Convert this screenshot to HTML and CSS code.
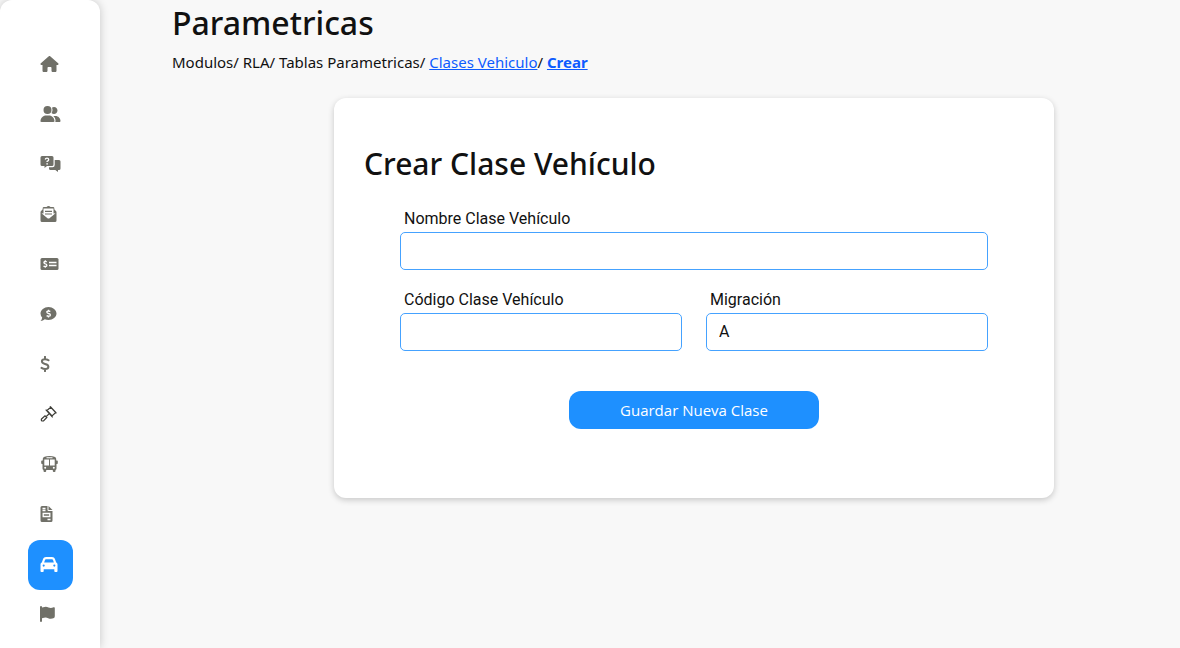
FILE: index.html
```
<!DOCTYPE html>
<html lang="es">
<head>
    <meta charset="utf-8">
    <title>Crear Clase Vehículo</title>
    <meta name="viewport" content="width=device-width, initial-scale=1.0">
    <link rel="stylesheet" href="styles.css">
</head>

<body>
<nav class="sidebar">
    <a href="#" aria-label="Inicio">
        <svg width="19" height="16" viewBox="0 0 576 512"><path d="M575.8 255.5c0 18-15 32.1-32 32.1h-32l.7 160.2c0 2.7-.2 5.4-.5 8.1V472c0 22.1-17.9 40-40 40H392c-22.1 0-40-17.9-40-40V384c0-17.7-14.3-32-32-32H256c-17.7 0-32 14.3-32 32v88c0 22.1-17.9 40-40 40H104c-22.1 0-40-17.9-40-40V287.6H32c-18 0-32-14-32-32.1c0-9 3-17 10-24L266.4 8c7-7 15-8 22-8s15 2 21 7L564.8 231.5c8 7 12 15 11 24z"/></svg>
    </a>
    <a href="#" aria-label="Usuarios">
        <svg width="21" height="16" viewBox="0 0 640 512"><path d="M96 128a128 128 0 1 1 256 0A128 128 0 1 1 96 128zM0 482.3C0 383.8 79.8 304 178.3 304h91.4C368.2 304 448 383.8 448 482.3c0 16.4-13.3 29.7-29.7 29.7H29.7C13.3 512 0 498.7 0 482.3zM609.3 512H471.4c5.4-9.4 8.6-20.3 8.6-32v-8c0-60.7-27.1-115.2-69.8-151.8c2.4-.1 4.7-.2 7.1-.2h61.4C567.8 320 640 392.2 640 481.3c0 17-13.8 30.7-30.7 30.7zM432 256c-31 0-59-12.6-79.3-32.9C372.4 196.5 384 163.6 384 128c0-26.8-6.6-52.1-18.3-74.3C384.3 40.1 407.2 32 432 32c61.9 0 112 50.1 112 112s-50.1 112-112 112z"/></svg>
    </a>
    <a href="#" aria-label="Consultas">
        <svg width="21" height="16" viewBox="0 0 20 16">
            <path d="M1.5 0H11.5Q13 0 13 1.5V8.5Q13 10 11.5 10H6.5L4 12V10H1.5Q0 10 0 8.5V1.5Q0 0 1.5 0z"/>
            <path d="M14.2 4H18.5Q20 4 20 5.5V12.5Q20 14 18.5 14H17.5V16L14.8 14H10Q8.5 14 8.5 12.5V11.2H12Q14.2 11.2 14.2 9z"/>
            <path class="cut" d="M4.7 3.5Q5 2.2 6.5 2.2Q8.2 2.2 8.2 3.7Q8.2 4.5 6.6 5.3V6"/>
            <circle class="hole" cx="6.6" cy="7.9" r=".8"/>
        </svg>
    </a>
    <a href="#" aria-label="Correspondencia">
        <svg width="17" height="16" viewBox="0 0 16 16">
            <path d="M8 0Q9 0 10 1H12.5Q13.8 1 13.8 2V3.3L15.4 5Q16 5.5 16 6.2V14.5Q16 16 14.5 16H1.5Q0 16 0 14.5V6.2Q0 5.5.6 5L2.2 3.3V2Q2.2 1 3.5 1H6Q7 0 8 0z"/>
            <path class="hole" d="M3 2.5H13V7.5L15 7.3L9.3 12Q8 13 6.7 12L1 7.3L3 7.5z"/>
            <path class="line" d="M4.5 5.3H11.5M4.5 8H11.5"/>
        </svg>
    </a>
    <a href="#" aria-label="Pagos">
        <svg width="19" height="16" viewBox="0 0 18 16">
            <rect y="2" width="18" height="12" rx="1.5"/>
            <path class="cut" d="M8.5 6.5H16M8.5 9.5H16M6.2 6Q5.7 5.5 4.7 5.5Q3.4 5.5 3.4 6.6Q3.4 7.5 4.8 7.9Q6.4 8.3 6.4 9.4Q6.4 10.5 4.8 10.5Q3.7 10.5 3 9.9M4.8 4.3V5.5M4.8 10.5V11.7"/>
        </svg>
    </a>
    <a href="#" aria-label="Cobros">
        <svg width="17" height="16" viewBox="0 0 16 16">
            <path d="M8 1C12.4 1 16 4 16 7.5S12.4 14 8 14Q6 14 4.3 13.3Q2.5 15 0 15Q1.5 13.5 1.7 11.5Q0 9.7 0 7.5C0 4 3.6 1 8 1z"/>
            <path class="cut" d="M9.8 5.6Q9 5 8 5Q6.3 5 6.3 6.1Q6.3 7.1 8 7.5Q9.9 7.9 9.9 9Q9.9 10.2 8 10.2Q7 10.2 6.1 9.6M8 3.7V5M8 10.2V11.5"/>
        </svg>
    </a>
    <a href="#" aria-label="Tarifas">
        <svg width="10" height="16" viewBox="0 0 10 16"><path class="line thick" d="M8.5 4.3Q7 3.2 5 3.2Q1.9 3.2 1.9 5.3Q1.9 7.2 5 7.9Q8.4 8.6 8.4 10.7Q8.4 13 5.2 13Q3.3 13 1.5 11.9M5 .8V3M5 13V15.2"/></svg>
    </a>
    <a href="#" aria-label="Juzgados">
        <svg width="17" height="16" viewBox="0 0 16 16"><path class="line dark" d="M6.5 4.5L10.3 1L15.3 6.5L11.5 10zM5.2 3.7L12.2 11.3M9.4 .4L15.9 7.4M8.8 7.6L6 10.2M1 13L4.5 9.8L6.3 11.5L3 15H1.5Q.5 14.5 1 13z"/></svg>
    </a>
    <a href="#" aria-label="Transporte">
        <svg width="18" height="16" viewBox="0 0 18 16">
            <path d="M9.5 0Q16 0 16.2 2.8V4.5H17Q17.8 4.5 17.8 5.3V7.2Q17.8 8 17 8H16.5V12.5Q16.5 13.5 15.5 14V15Q15.5 16 14.5 16H13.8Q12.8 16 12.8 15V14H6.2V15Q6.2 16 5.2 16H4.5Q3.5 16 3.5 15V14Q2.5 13.5 2.5 12.5V8H2Q1.2 8 1.2 7.2V5.3Q1.2 4.5 2 4.5H2.8V2.8Q3 0 9.5 0z"/>
            <path class="hole" d="M4.3 3.5H9V9.5H4.3zM10 3.5H14.7V9.5H10zM6.5 1.2H12.5V2.2H6.5z"/>
            <circle class="hole" cx="5.2" cy="11.7" r="1"/><circle class="hole" cx="13.8" cy="11.7" r="1"/>
        </svg>
    </a>
    <a href="#" aria-label="Facturas">
        <svg width="13" height="16" viewBox="0 0 12 16">
            <path d="M1.5 0H7V4Q7 5 8 5H12V14.5Q12 16 10.5 16H1.5Q0 16 0 14.5V1.5Q0 0 1.5 0zM8 0L12 4H8z"/>
            <path class="cut" d="M2 2.5H5M2 4.5H5M2.7 7.5H9.3V10.5H2.7zM7 13.5H10"/>
        </svg>
    </a>
    <a href="#" class="active" aria-label="Vehículos">
        <svg width="18" height="17" viewBox="0 0 512 512"><path d="M135.2 117.4L109.1 192H402.9l-26.1-74.6C372.3 104.6 360.2 96 346.6 96H165.4c-13.6 0-25.7 8.6-30.2 21.4zM39.6 196.8L74.8 96.3C88.3 57.8 124.6 32 165.4 32H346.6c40.8 0 77.1 25.8 90.6 64.3l35.2 100.5c23.2 9.6 39.6 32.5 39.6 59.2V448c0 17.7-14.3 32-32 32H448c-17.7 0-32-14.3-32-32V400H96v48c0 17.7-14.3 32-32 32H32c-17.7 0-32-14.3-32-32V256c0-26.7 16.4-49.6 39.6-59.2zM128 288a32 32 0 1 0 -64 0 32 32 0 1 0 64 0zm288 32a32 32 0 1 0 0-64 32 32 0 1 0 0 64z"/></svg>
    </a>
    <a href="#" aria-label="Reportes">
        <svg width="15" height="16" viewBox="0 0 15 16"><path d="M1 0Q2 0 2 1V1.5L4.5 1Q6.5 .5 8.5 1.5Q11 2.5 13.5 1.3Q14.8 .8 14.8 2V10Q14.8 11.5 14 12Q11 13.3 8.2 12.2Q6.2 11.2 4 11.8L2 12.3V15Q2 16 1 16T0 15V1Q0 0 1 0z"/></svg>
    </a>
</nav>

<main class="content">
    <h1>Parametricas</h1>
    <p class="ruta">Modulos/ RLA/ Tablas Parametricas/ <a href="#">Clases Vehiculo</a>/ <a href="#" class="actual">Crear</a></p>

    <section class="contenedor">
        <form class="card">
            <h2>Crear Clase Vehículo</h2>
            <div class="campos">
                <div class="campo ancho">
                    <label for="nombre">Nombre Clase Vehículo</label>
                    <input type="text" id="nombre" name="nombre">
                </div>
                <div class="campo">
                    <label for="codigo">Código Clase Vehículo</label>
                    <input type="text" id="codigo" name="codigo">
                </div>
                <div class="campo">
                    <label for="migracion">Migración</label>
                    <input type="text" id="migracion" name="migracion" value="A">
                </div>
            </div>
            <button type="submit" class="btn">Guardar Nueva Clase</button>
        </form>
    </section>
</main>
</body>
</html>
```
FILE: styles.css
```
* {
    box-sizing: border-box;
}

body {
    margin: 0;
    display: flex;
    min-height: 100vh;
    font-family: "Noto Sans", "Open Sans", sans-serif;
    font-size: 15px;
    color: #111;
    background: #f8f8f8;
}

.sidebar {
    flex: none;
    width: 100px;
    padding: 40px 27px 8px 28px;
    background: white;
    border-radius: 12px 12px 0 0;
    box-shadow: 0 0 10px rgba(0, 0, 0, 0.2);
}

.sidebar a {
    display: flex;
    align-items: center;
    height: 50px;
    padding: 0 0 2px 12px;
    border-radius: 12px;
    color: #707068;
    --fondo: white;
}

.sidebar a.active {
    background: #1e90ff;
    color: white;
    --fondo: #1e90ff;
}

.sidebar svg {
    fill: currentColor;
}

.sidebar .hole {
    fill: var(--fondo);
}

.sidebar .cut {
    fill: none;
    stroke: var(--fondo);
    stroke-width: 1.3;
}

.sidebar .line {
    fill: none;
    stroke: currentColor;
    stroke-width: 1.2;
}

.sidebar .thick {
    stroke-width: 2;
    stroke-linecap: round;
}

.sidebar .dark {
    stroke: #3c3c36;
}

.content {
    flex: 1;
    padding-left: 72px;
}

h1,
h2 {
    margin: 0;
    font-weight: 500;
}

h1 {
    font-size: 32px;
    line-height: 45px;
}

.ruta {
    margin: 5px 0 0;
    line-height: 24px;
}

.ruta a {
    color: #0d5bff;
}

.ruta .actual {
    font-weight: 700;
}

.contenedor {
    padding: 24px 0 24px 36px;
}

.card {
    max-width: 720px;
    min-height: 400px;
    margin: auto;
    padding: 42px 30px;
    background: white;
    border-radius: 12px;
    box-shadow: 0 2px 6px rgba(0, 0, 0, 0.2);
}

h2 {
    font-size: 30px;
    line-height: 47px;
}

.campos {
    display: grid;
    grid-template-columns: 1fr 1fr;
    gap: 15px 24px;
    padding: 17px 36px 40px;
}

.ancho {
    grid-column: 1 / 3;
}

label {
    display: block;
    padding: 2px 4px 0;
    font: 16px/26px Roboto, sans-serif;
}

input {
    display: block;
    width: 100%;
    height: 38px;
    padding: 0 12px 2px;
    border: 1px solid #45a2ff;
    border-radius: 5px;
    font: 16px Roboto, sans-serif;
    color: #111;
}

.btn {
    display: block;
    width: 250px;
    height: 38px;
    margin: auto;
    border: none;
    border-radius: 12px;
    background: #1e90ff;
    color: white;
    font: 15px "Open Sans", "Noto Sans", sans-serif;
    cursor: pointer;
}
```
